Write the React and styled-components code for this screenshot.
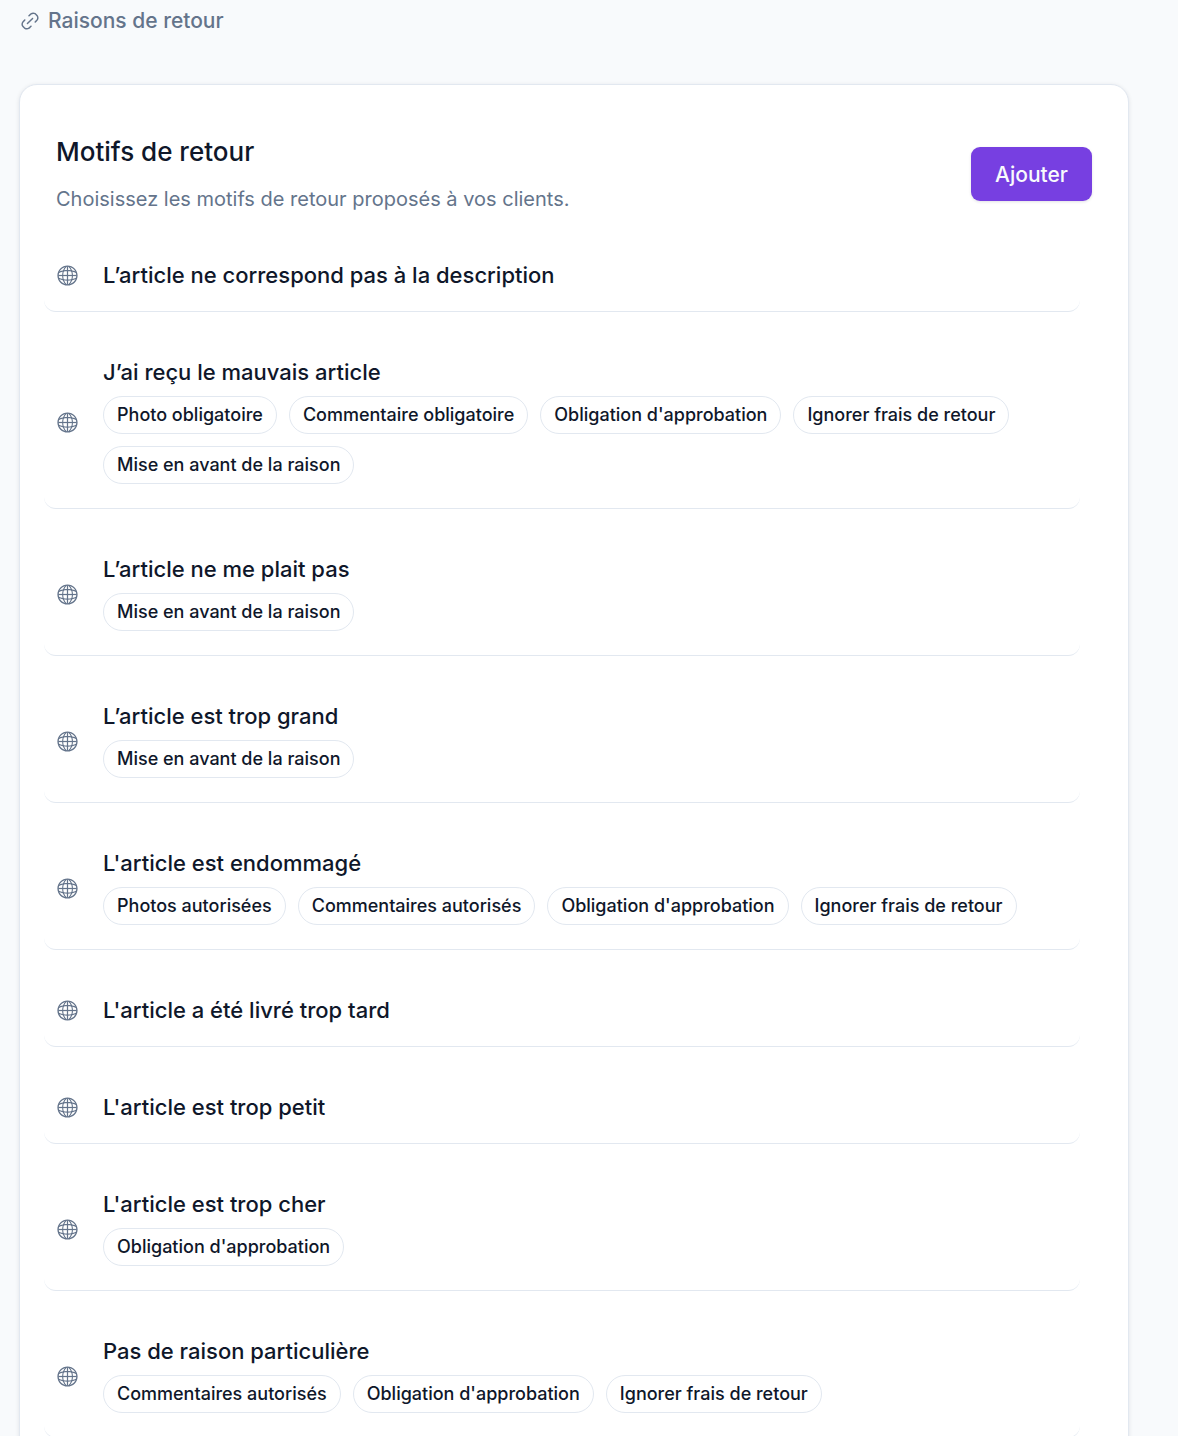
import React from "react";
import styled, { createGlobalStyle } from "styled-components";
import { RxGlobe, RxLink2 } from "react-icons/rx";

const GlobalStyle = createGlobalStyle`
  * {
    box-sizing: border-box;
  }
  body {
    margin: 0;
    background: #f8fafc;
    color: #0f172a;
    font-family: Inter, "Liberation Sans", sans-serif;
  }
`;

const Page = styled.div`
  padding: 5px 49px 48px 19px;
`;

const Breadcrumb = styled.nav`
  display: flex;
  align-items: center;
  height: 32px;
  margin-bottom: 47px;
`;

const BreadcrumbLink = styled.a`
  display: inline-flex;
  align-items: center;
  gap: 7px;
  color: #64748b;
  font-size: 21px;
  font-weight: 500;
  line-height: 32px;
  text-decoration: none;
`;

const Card = styled.section`
  padding: 48px 36px 36px;
  background: #ffffff;
  border: 1px solid #e2e8f0;
  border-radius: 18px;
  box-shadow: 0 1px 4px rgba(15, 23, 42, 0.1);
`;

const CardHeader = styled.header`
  display: flex;
  align-items: center;
  justify-content: space-between;
  gap: 24px;
`;

const Title = styled.h1`
  margin: 0 0 12px;
  font-size: 26px;
  font-weight: 500;
  line-height: 38px;
`;

const Description = styled.p`
  margin: 0;
  color: #64748b;
  font-size: 20px;
  line-height: 32px;
`;

const AddButton = styled.button`
  height: 54px;
  padding: 0 24px;
  background: #773fe1;
  border: 0;
  border-radius: 9px;
  box-shadow: 0 1px 3px rgba(15, 23, 42, 0.12);
  color: #f8fafc;
  font-family: inherit;
  font-size: 21px;
  font-weight: 500;
  cursor: pointer;
`;

const ReasonList = styled.ul`
  margin: 0 12px 0 -12px;
  padding: 0;
  list-style: none;
`;

const ReasonRow = styled.li`
  display: flex;
  align-items: center;
  gap: 24px;
  margin-top: 24px;
  padding: 24px 12px;
  border-bottom: 1px solid #e2e8f0;
  border-radius: 12px;
`;

const GlobeIcon = styled(RxGlobe)`
  flex: none;
  width: 23px;
  height: 23px;
  color: #64748b;
`;

const ReasonBody = styled.div`
  display: flex;
  flex-direction: column;
  gap: 12px;
  min-width: 0;
`;

const ReasonName = styled.h2`
  margin: 0;
  font-size: 22px;
  font-weight: 500;
  line-height: 24px;
`;

const Tags = styled.div`
  display: flex;
  flex-wrap: wrap;
  gap: 12px;
`;

const Tag = styled.span`
  padding: 0 13px;
  border: 1px solid #e2e8f0;
  border-radius: 19px;
  font-size: 18px;
  font-weight: 500;
  line-height: 36px;
  white-space: nowrap;
`;

const reasons = [
  { name: "L’article ne correspond pas à la description", tags: [] },
  {
    name: "J’ai reçu le mauvais article",
    tags: [
      "Photo obligatoire",
      "Commentaire obligatoire",
      "Obligation d'approbation",
      "Ignorer frais de retour",
      "Mise en avant de la raison",
    ],
  },
  { name: "L’article ne me plait pas", tags: ["Mise en avant de la raison"] },
  { name: "L’article est trop grand", tags: ["Mise en avant de la raison"] },
  {
    name: "L'article est endommagé",
    tags: [
      "Photos autorisées",
      "Commentaires autorisés",
      "Obligation d'approbation",
      "Ignorer frais de retour",
    ],
  },
  { name: "L'article a été livré trop tard", tags: [] },
  { name: "L'article est trop petit", tags: [] },
  { name: "L'article est trop cher", tags: ["Obligation d'approbation"] },
  {
    name: "Pas de raison particulière",
    tags: [
      "Commentaires autorisés",
      "Obligation d'approbation",
      "Ignorer frais de retour",
    ],
  },
];

function App() {
  return (
    <>
      <GlobalStyle />
      <Page>
        <Breadcrumb>
          <BreadcrumbLink href="#raisons">
            <RxLink2 size={22} />
            Raisons de retour
          </BreadcrumbLink>
        </Breadcrumb>
        <Card>
          <CardHeader>
            <div>
              <Title>Motifs de retour</Title>
              <Description>
                Choisissez les motifs de retour proposés à vos clients.
              </Description>
            </div>
            <AddButton type="button">Ajouter</AddButton>
          </CardHeader>
          <ReasonList>
            {reasons.map((reason) => (
              <ReasonRow key={reason.name}>
                <GlobeIcon />
                <ReasonBody>
                  <ReasonName>{reason.name}</ReasonName>
                  {reason.tags.length > 0 && (
                    <Tags>
                      {reason.tags.map((tag) => (
                        <Tag key={tag}>{tag}</Tag>
                      ))}
                    </Tags>
                  )}
                </ReasonBody>
              </ReasonRow>
            ))}
          </ReasonList>
        </Card>
      </Page>
    </>
  );
}

export default App;
